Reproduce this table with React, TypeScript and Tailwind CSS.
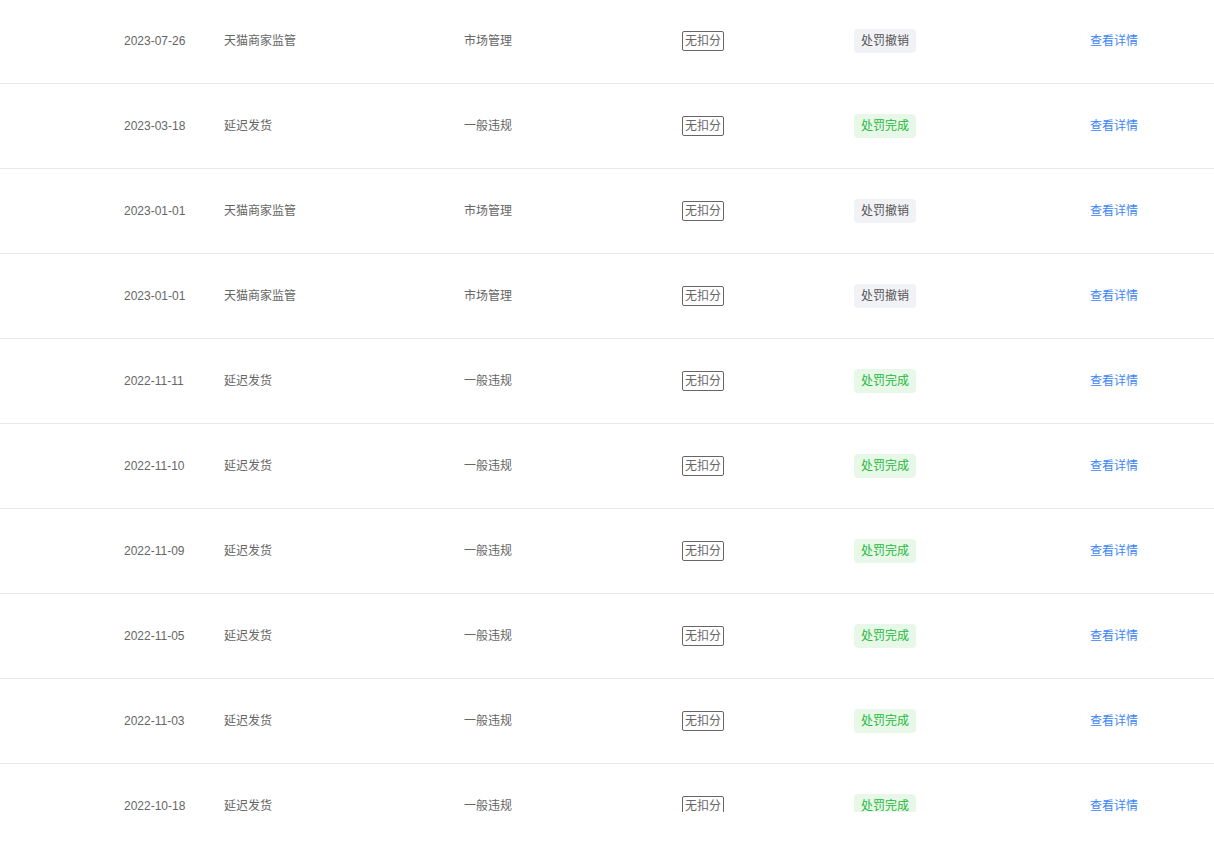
const rows = [
  { date: "2023-07-26", type: "天猫商家监管", cat: "市场管理", status: "revoked" },
  { date: "2023-03-18", type: "延迟发货", cat: "一般违规", status: "done" },
  { date: "2023-01-01", type: "天猫商家监管", cat: "市场管理", status: "revoked" },
  { date: "2023-01-01", type: "天猫商家监管", cat: "市场管理", status: "revoked" },
  { date: "2022-11-11", type: "延迟发货", cat: "一般违规", status: "done" },
  { date: "2022-11-10", type: "延迟发货", cat: "一般违规", status: "done" },
  { date: "2022-11-09", type: "延迟发货", cat: "一般违规", status: "done" },
  { date: "2022-11-05", type: "延迟发货", cat: "一般违规", status: "done" },
  { date: "2022-11-03", type: "延迟发货", cat: "一般违规", status: "done" },
  { date: "2022-10-18", type: "延迟发货", cat: "一般违规", status: "done" },
];

function StatusTag({ status }: { status: string }) {
  if (status === "done") {
    return (
      <span className="inline-flex h-6 items-center rounded-[4px] bg-[#e8f8e8] px-[7px] text-[#24b83a]">
        处罚完成
      </span>
    );
  }
  return (
    <span className="inline-flex h-6 items-center rounded-[4px] bg-[#f1f2f5] px-[7px] text-[#555]">
      处罚撤销
    </span>
  );
}

export default function App() {
  return (
    <div
      className="h-[812px] w-[1214px] overflow-hidden bg-white text-[12px] text-[#666]"
      style={{ fontFamily: '"Liberation Sans", "Noto Sans CJK SC", sans-serif' }}
    >
      <div className="-mt-[1px]">
        {rows.map((r, i) => (
          <div
            key={i}
            className="grid h-[85px] grid-cols-[124px_100px_240px_218px_172px_236px_1fr] items-center border-b border-[#e8e8e8]"
          >
            <div />
            <div>{r.date}</div>
            <div>{r.type}</div>
            <div>{r.cat}</div>
            <div>
              <span className="inline-flex h-5 items-center rounded-[2px] border border-[#666] px-[2px] leading-none">
                无扣分
              </span>
            </div>
            <div>
              <StatusTag status={r.status} />
            </div>
            <div>
              <a className="cursor-pointer text-[#3d86f5]">查看详情</a>
            </div>
          </div>
        ))}
      </div>
    </div>
  );
}
